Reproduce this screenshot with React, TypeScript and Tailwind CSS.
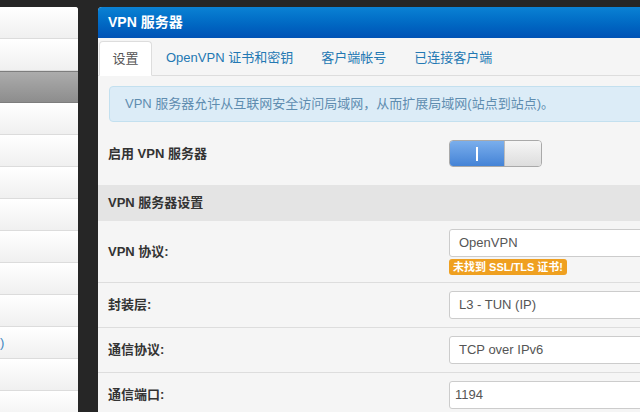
import React from 'react';

const font = { fontFamily: '"Liberation Sans", "Noto Sans CJK SC", sans-serif' };

const tabs = ['OpenVPN 证书和密钥', '客户端帐号', '已连接客户端'];

function SideNav() {
  const rows = Array.from({ length: 13 });
  return (
    <div className="w-[78px] shrink-0 flex flex-col rounded-tr-[3px] overflow-hidden bg-[#f4f4f4]">
      {rows.map((_, i) =>
        i === 2 ? (
          <div key={i} className="h-[32px] shrink-0 bg-gradient-to-b from-[#acacac] to-[#8d8d8d] border-y border-[#7d7d7d]" />
        ) : (
          <div
            key={i}
            className="h-[32px] shrink-0 bg-gradient-to-b from-[#ffffff] to-[#f0f0f0] border-b border-[#dcdcdc] flex items-center"
          >
            {i === 10 && <span className="text-[13px] text-[#3d86c0]">)</span>}
          </div>
        ),
      )}
    </div>
  );
}

function Select({ value, input }: { value: string; input?: boolean }) {
  return (
    <div
      className={`h-[28px] w-[260px] bg-white border border-[#cccccc] rounded-[3px] flex items-center text-[13px] text-[#555] ${
        input ? 'pl-[5px]' : 'pl-[9px]'
      }`}
    >
      {value}
    </div>
  );
}

function Row({ label, children, h }: { label: string; children: React.ReactNode; h: string }) {
  return (
    <div className={`${h} flex items-center border-b border-[#dddddd] pl-[10px]`}>
      <div className="w-[341px] shrink-0 text-[13px] font-bold text-[#333]">{label}</div>
      <div>{children}</div>
    </div>
  );
}

export default function App() {
  return (
    <div className="w-[640px] h-[412px] overflow-hidden bg-[#262626] flex pt-[7px]" style={font}>
      <SideNav />
      <div className="ml-[20px] w-[600px] shrink-0 flex flex-col bg-[#f5f5f5] rounded-tl-[4px] overflow-hidden">
        <div className="h-[31px] shrink-0 bg-gradient-to-b from-[#0b82d4] to-[#0052b5] flex items-center pl-[10px] text-white font-bold text-[14px]">
          VPN 服务器
        </div>

        <div className="h-[38px] shrink-0 flex items-end border-b border-[#dddddd] pl-px">
          <div className="h-[35px] w-[53px] -mb-px bg-white border border-[#dddddd] border-b-white rounded-t-[4px] flex items-center justify-center text-[13px] text-[#555]">
            设置
          </div>
          {tabs.map((t) => (
            <div key={t} className="h-[35px] px-[14px] flex items-center text-[13px] text-[#2378b3]">
              {t}
            </div>
          ))}
        </div>

        <div className="mt-[10px] ml-[11px] h-[36px] shrink-0 bg-[#dcecf7] border border-[#c3e0ef] rounded-l-[4px] flex items-center pl-[15px] text-[13px] text-[#5f8db0]">
          VPN 服务器允许从互联网安全访问局域网，从而扩展局域网(站点到站点)。
        </div>

        <div className="h-[63px] shrink-0 flex items-center pl-[10px]">
          <div className="w-[341px] shrink-0 text-[13px] font-bold text-[#333]">启用 VPN 服务器</div>
          <div className="h-[27px] w-[93px] flex rounded-[4px] border border-[#a9a9a9] overflow-hidden">
            <div className="w-[54px] bg-gradient-to-b from-[#7aaeec] to-[#4483d6] flex items-center justify-center">
              <div className="w-[2px] h-[14px] bg-white" />
            </div>
            <div className="flex-1 bg-gradient-to-b from-[#f6f6f6] to-[#dddddd] border-l border-[#bbbbbb]" />
          </div>
        </div>

        <div className="h-[36px] shrink-0 bg-[#e4e4e4] flex items-center pl-[10px] text-[13px] font-bold text-[#333]">
          VPN 服务器设置
        </div>

        <Row label="VPN 协议:" h="h-[62px] shrink-0">
          <div className="flex flex-col items-start gap-[2px] mt-[1px]">
            <Select value="OpenVPN" />
            <span className="h-[16px] px-[4px] rounded-[3px] bg-[#efa020] text-white text-[11px] font-bold flex items-center">
              未找到 SSL/TLS 证书!
            </span>
          </div>
        </Row>
        <Row label="封装层:" h="h-[45px] shrink-0">
          <Select value="L3 - TUN (IP)" />
        </Row>
        <Row label="通信协议:" h="h-[45px] shrink-0">
          <Select value="TCP over IPv6" />
        </Row>
        <Row label="通信端口:" h="h-[45px] shrink-0">
          <Select value="1194" input />
        </Row>
      </div>
    </div>
  );
}
